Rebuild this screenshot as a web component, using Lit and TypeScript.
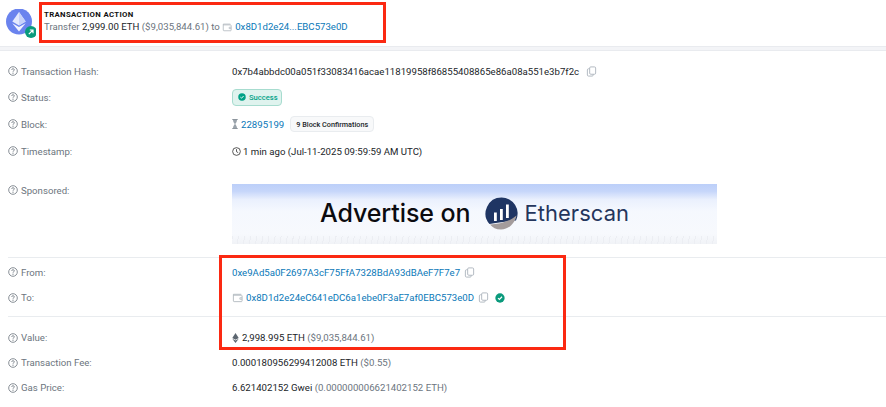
import { LitElement, html, css } from "lit";
import { customElement } from "lit/decorators.js";

const help = html`<svg class="help" viewBox="0 0 16 16"><circle cx="8" cy="8" r="6.9" fill="none" stroke="#6c757e" stroke-width="1.3"/><path d="M5.9 6.200c0-1.200 1-1.900 2.100-1.900s2.100.7 2.100 1.800c0 1.600-2.100 1.600-2.100 3.100" fill="none" stroke="#6c757e" stroke-width="1.3"/><circle cx="8" cy="11.400" r=".9" fill="#6c757e"/></svg>`;
const copy = html`<svg class="copy" viewBox="0 0 12 12"><rect x="4" y="1" width="6.500" height="8" rx="1.200" fill="none" stroke="#adb5bd" stroke-width="1"/><path d="M4 3H2.700C2 3 1.500 3.500 1.500 4.200v5.600c0 .7.500 1.200 1.200 1.200h4c.7 0 1.200-.5 1.200-1.200V9" fill="none" stroke="#adb5bd" stroke-width="1"/></svg>`;
const walletPaths = html`<svg class="wallet" viewBox="0 0 12 12"><path d="M1.500 2.500h8.500M1.500 2.500v7.200c0 .4.300.8.800.8h8c.4 0 .7-.3.7-.8V4.300c0-.4-.3-.8-.7-.8H1.500" fill="none" stroke="#aab2b9" stroke-width=".9"/><path d="M11 6.300H8.600v1.600H11" fill="none" stroke="#aab2b9" stroke-width=".8"/></svg>`;
const check = (cls: string, bg: string) => html`<svg class=${cls} viewBox="0 0 12 12"><circle cx="6" cy="6" r="5.600" fill=${bg}/><path d="M3.600 6.200l1.700 1.600 3.100-3.300" fill="none" stroke="#fff" stroke-width="1.400"/></svg>`;

@customElement("app-root")
export class AppRoot extends LitElement {
  static styles = css`
    :host { display: block; width: 886px; height: 407px; position: relative; overflow: hidden; background: #fff; font-family: Roboto, "Liberation Sans", sans-serif; font-size: 9.65px; color: #212529; }
    a { color: #0a78b8; text-decoration: none; }
    .head { height: 46px; box-sizing: border-box; padding: 9px 0 0 6px; display: flex; gap: 12px; }
    .logo { width: 30px; height: 30px; flex: none; }
    .action { display: flex; flex-direction: column; margin-left: -4px; }
    .title { font-size: 7.8px; font-weight: 700; letter-spacing: .33px; line-height: 11px; color: #111; }
    .transfer { line-height: 14px; display: flex; align-items: center; white-space: pre; }
    .muted { color: #6c757e; }
    .band { height: 5px; box-sizing: border-box; background: #f3f4f7; border-top: 1px solid #e9ebef; border-bottom: 1px solid #e9ebef; }
    .details { padding-top: 7px; }
    .row { display: grid; grid-template-columns: 224px 1fr; padding-left: 8px; align-items: center; white-space: pre; }
    .h25 { height: 25px; } .h26 { height: 26px; } .h28 { height: 28px; }
    .label { display: flex; align-items: center; gap: 3px; color: #6c757e; }
    .help { width: 10px; height: 10px; flex: none; }
    .val { display: flex; align-items: center; }
    .copy { width: 11px; height: 11px; margin-left: 4px; }
    .wallet { width: 10px; height: 10px; margin: 0 3px 0 0; flex: none; }
    .lead .wallet { width: 11px; height: 11px; margin: 0 3px 0 0; }
    .ok { width: 10px; height: 10px; margin-left: 6px; }
    .badge { display: inline-flex; align-items: center; gap: 3px; height: 17px; box-sizing: border-box; padding: 0 5px; background: #dff3ee; border: 1px solid #a7dccf; border-radius: 4px; color: #00a186; font-size: 7.6px; font-weight: 500; width: 50px; }
    .badge svg { width: 8px; height: 8px; flex: none; }
    .conf { display: inline-flex; align-items: center; height: 16px; box-sizing: border-box; padding: 0 5px; margin-left: 6px; background: #f8f9fa; border: 1px solid #e9ecef; border-radius: 4px; font-size: 7.25px; font-weight: 500; color: #212529; }
    .hour { width: 6px; height: 10px; margin-right: 3px; }
    .clock { width: 9px; height: 9px; margin-right: 2px; }
    .sponsored { align-items: start; padding-top: 20px; padding-bottom: 13px; }
    .sponsored .label { height: 12px; }
    .ad { width: 485px; height: 60px; box-sizing: border-box; background:
        repeating-linear-gradient(100deg, #eceef3 0 1px, transparent 1px 6px) 0 100% / 100% 8px no-repeat,
        linear-gradient(#bccff9 0, #c6d6fa 12%, #eaf0fd 26%, #f5f8fe 45%, #f7f9fd 82%, #f1f3f7 100%);
      display: flex; align-items: center; padding: 0 0 2px 88px; }
    .ad-text { font-family: Inter, Roboto, sans-serif; font-size: 25px; font-weight: 500; color: #0b0b0f; letter-spacing: -.1px; }
    .ad-logo { width: 33px; height: 33px; margin-left: 15px; margin-right: 6px; flex: none; }
    .ad-brand { font-family: Inter, Roboto, sans-serif; font-size: 21.9px; color: #24355c; letter-spacing: .1px; }
    .divider { height: 1px; background: #e9ecef; margin-left: 8px; }
    .gap1 { height: 1px; }
    .gap { height: 6px; }
    .gap8 { height: 8px; }
    .eth { width: 7px; height: 10px; margin-right: 3px; }
    .frame { position: absolute; box-sizing: border-box; border: 3px solid #fb2912; pointer-events: none; }
    .f1 { left: 39px; top: 2px; width: 347px; height: 41px; }
    .f2 { left: 219px; top: 255px; width: 347px; height: 95px; }
  `;

  render() {
    return html`
      <div class="head">
        <svg class="logo" viewBox="0 0 30 30">
          <circle cx="13" cy="12.500" r="13" fill="#6a83ee"/>
          <path d="M13 3L6.300 12.600 13 16.500 19.700 12.600z" fill="#e4e9fd"/>
          <path d="M13 3v13.500l6.700-3.900z" fill="#c7d2fa"/>
          <path d="M6.300 14.200L13 22.500l6.700-8.300L13 18z" fill="#f1f3fe"/>
          <circle cx="25" cy="23" r="6" fill="#0a9a7c"/>
          <path d="M22.800 25.200l4.200-4.200M23.800 21h3.200v3.200" fill="none" stroke="#fff" stroke-width="1.200"/>
        </svg>
        <div class="action">
          <div class="title">TRANSACTION ACTION</div>
          <div class="transfer"><span class="muted">Transfer </span>2,999.00 ETH <span class="muted">($9,035,844.61) to </span>${walletPaths}<a href="#">0x8D1d2e24...EBC573e0D</a></div>
        </div>
      </div>
      <div class="band"></div>
      <div class="details">
        <div class="row h26"><div class="label">${help}Transaction Hash:</div><div class="val">0x7b4abbdc00a051f33083416acae11819958f86855408865e86a08a551e3b7f2c ${copy}</div></div>
        <div class="row h26"><div class="label">${help}Status:</div><div class="val"><span class="badge">${check("", "#00a186")}Success</span></div></div>
        <div class="row h28"><div class="label">${help}Block:</div><div class="val">
          <svg class="hour" viewBox="0 0 6 10"><path d="M.3.500h5.400M.3 9.500h5.400" stroke="#8c959d" stroke-width="1"/><path d="M1 1h4c0 2-1.300 3-1.700 4 .4 1 1.700 2 1.700 4H1c0-2 1.300-3 1.700-4C2.300 4 1 3 1 1z" fill="#9aa3ab"/></svg><a href="#">22895199</a><span class="conf">9 Block Confirmations</span></div></div>
        <div class="row h26"><div class="label">${help}Timestamp:</div><div class="val">
          <svg class="clock" viewBox="0 0 10 10"><circle cx="5" cy="5" r="4.300" fill="none" stroke="#333" stroke-width=".9"/><path d="M5 2.400V5.200L6.900 6.300" fill="none" stroke="#333" stroke-width=".9"/></svg>1 min ago (Jul-11-2025 09:59:59 AM UTC)</div></div>
        <div class="row sponsored"><div class="label">${help}Sponsored:</div>
          <div class="ad"><span class="ad-text">Advertise on</span>
            <svg class="ad-logo" viewBox="0 0 33 33">
              <path d="M16.500.5a16 16 0 0 1 14.500 23C24 24 12 26 4.500 27A16 16 0 0 1 16.500.5z" fill="#1f3563"/>
              <path d="M5 27.500C14 27 24 25 31.500 18.500 30 26 24 32.500 16 32.500 11 32.500 7.500 30.500 5 27.500z" fill="#a49c9c"/>
              <path d="M9 24V15.500h2.800V24zM15 23V12h2.800v11zM21 21V7.500h2.800V21z" fill="#fff"/>
            </svg>
            <span class="ad-brand">Etherscan</span></div></div>
        <div class="divider"></div>
        <div class="gap1"></div>
        <div class="row h26"><div class="label">${help}From:</div><div class="val"><a href="#">0xe9Ad5a0F2697A3cF75FfA7328BdA93dBAeF7F7e7</a>${copy}</div></div>
        <div class="row h25"><div class="label">${help}To:</div><div class="val lead">${walletPaths}<a href="#">0x8D1d2e24eC641eDC6a1ebe0F3aE7af0EBC573e0D</a>${copy}${check("ok", "#0a9a7c")}</div></div>
        <div class="gap"></div>
        <div class="divider"></div>
        <div class="gap8"></div>
        <div class="row h25"><div class="label">${help}Value:</div><div class="val">
          <svg class="eth" viewBox="0 0 7 10"><path d="M3.500 0L.3 5 3.500 6.800 6.700 5z" fill="#5c6670"/><path d="M.3 5.800L3.500 10l3.200-4.200L3.500 7.600z" fill="#5c6670"/></svg>2,998.995 ETH <span class="muted">($9,035,844.61)</span></div></div>
        <div class="row h25"><div class="label">${help}Transaction Fee:</div><div class="val">0.000180956299412008 ETH <span class="muted">($0.55)</span></div></div>
        <div class="row h25"><div class="label">${help}Gas Price:</div><div class="val">6.621402152 Gwei <span class="muted">(0.000000006621402152 ETH)</span></div></div>
      </div>
      <div class="frame f1"></div>
      <div class="frame f2"></div>
    `;
  }
}
